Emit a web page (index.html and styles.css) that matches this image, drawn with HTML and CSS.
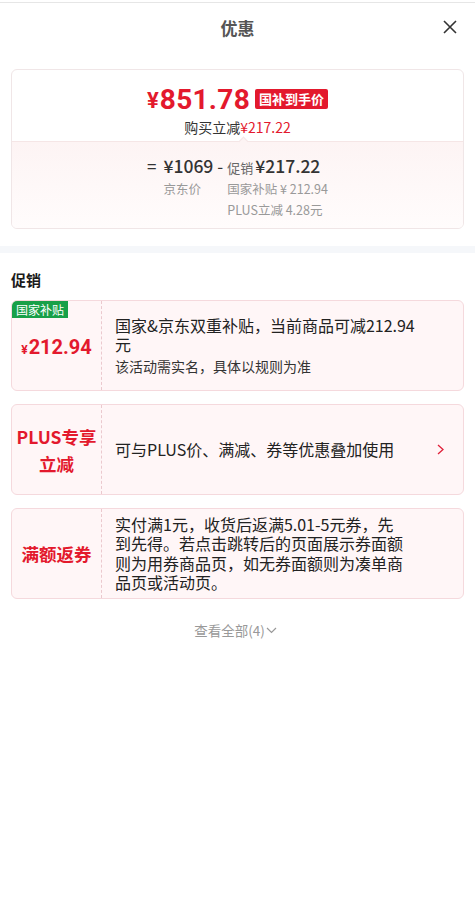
FILE: index.html
```html
<!DOCTYPE html>
<html lang="zh-CN">
<head>
  <meta charset="UTF-8">
  <meta name="viewport" content="width=device-width, initial-scale=1.0">
  <title>优惠</title>
  <link rel="stylesheet" href="styles.css">
</head>
<body>
  <div class="topline"></div>
  <header class="header">
    <span></span>
    <h1 class="title">优惠</h1>
    <button class="close" aria-label="关闭">
      <svg width="14" height="14" viewBox="0 0 14 14"><path d="M1 1L13 13M13 1L1 13" stroke="#333" stroke-width="1.6" fill="none"/></svg>
    </button>
  </header>

  <section class="summary">
    <div class="summary-top">
      <div class="final-price">
        <span class="yen">¥</span><span class="amount">851.78</span>
        <span class="badge">国补到手价</span>
      </div>
      <div class="saving">购买立减<span class="red">¥217.22</span></div>
    </div>
    <div class="summary-bottom">
      <div class="calc">
        <span class="op op--eq">=</span>
        <span class="val">¥1069</span>
        <span class="op">-</span>
        <span class="val"><small>促销</small>¥217.22</span>

        <span></span>
        <span class="note">京东价</span>
        <span></span>
        <span class="note">国家补贴 ¥ 212.94</span>

        <span></span>
        <span></span>
        <span></span>
        <span class="note">PLUS立减 4.28元</span>
      </div>
    </div>
  </section>

  <div class="band"></div>

  <section class="promos">
    <h2 class="promos-title">促销</h2>
    <div class="promo-list">
      <div class="promo">
        <span class="tag">国家补贴</span>
        <div class="promo-side">
          <div class="side-price"><span class="side-yen">¥</span>212.94</div>
        </div>
        <div class="promo-body">
          <div class="promo-text">
            国家&amp;京东双重补贴，当前商品可减212.94元
            <small>该活动需实名，具体以规则为准</small>
          </div>
        </div>
      </div>

      <div class="promo">
        <div class="promo-side">
          <div class="side-label">PLUS专享<br>立减</div>
        </div>
        <div class="promo-body">
          <div class="promo-text">可与PLUS价、满减、券等优惠叠加使用</div>
          <svg class="promo-arrow" width="7" height="11" viewBox="0 0 7 11"><path d="M1 1L6 5.5L1 10" stroke="#e0213a" stroke-width="1.3" fill="none"/></svg>
        </div>
      </div>

      <div class="promo">
        <div class="promo-side">
          <div class="side-label">满额返券</div>
        </div>
        <div class="promo-body">
          <div class="promo-text promo-text--narrow">实付满1元，收货后返满5.01-5元券，先到先得。若点击跳转后的页面展示券面额则为用券商品页，如无券面额则为凑单商品页或活动页。</div>
        </div>
      </div>
    </div>

    <div class="more">
      查看全部(4)
      <svg width="11" height="7" viewBox="0 0 11 7"><path d="M1 1L5.5 5.5L10 1" stroke="#999" stroke-width="1.2" fill="none"/></svg>
    </div>
  </section>
</body>
</html>
```

FILE: styles.css
```css
body {
  margin: 0;
  font-family: "Noto Sans CJK SC", "Noto Sans", sans-serif;
  color: #333;
  background: #fff;
}

.topline {
  margin-top: 2px;
  height: 1px;
  background: #e6e6e6;
}

.header {
  height: 48px;
  display: grid;
  grid-template-columns: 1fr auto 1fr;
  align-items: center;
}

.title {
  margin: 0;
  font-size: 17px;
  font-weight: 700;
  color: #555;
}

.close {
  justify-self: end;
  margin-right: 18px;
  padding: 0;
  border: none;
  background: none;
  width: 14px;
  height: 14px;
  display: flex;
}

/* price summary card */
.summary {
  margin: 18px 11px 0;
  border: 1px solid #f0e6e7;
  border-radius: 6px;
  overflow: hidden;
}

.summary-top {
  padding: 11px 0 4px;
  text-align: center;
  border-bottom: 1px solid #f5e6e6;
  position: relative;
}

.summary-top::after {
  content: "";
  position: absolute;
  left: 50%;
  margin-left: 2px;
  bottom: -4px;
  width: 6px;
  height: 6px;
  background: #fdf4f4;
  border-top: 1px solid #f5e6e6;
  border-left: 1px solid #f5e6e6;
  transform: rotate(45deg);
}

.final-price {
  height: 36px;
  display: flex;
  justify-content: center;
  align-items: center;
  color: #e3192d;
  font-family: Roboto, "Noto Sans", sans-serif;
  font-weight: 700;
}

.yen {
  font-size: 22px;
  margin-top: 3px;
  margin-right: 1px;
}

.amount {
  font-size: 28px;
  letter-spacing: 0.3px;
}

.badge {
  margin-left: 5px;
  height: 20px;
  line-height: 20px;
  padding: 0 4px;
  background: #e3192d;
  color: #fff;
  font-family: "Noto Sans CJK SC", sans-serif;
  font-size: 13px;
  border-radius: 2px;
}

.saving {
  font-size: 14px;
  line-height: 20px;
  color: #333;
}

.red {
  color: #e3192d;
}

.summary-bottom {
  padding: 11px 0 9px;
  background: linear-gradient(#fdf4f4, #fffcfc);
}

.calc {
  display: grid;
  grid-template-columns: repeat(4, auto);
  grid-template-rows: 24px 22px 20px;
  justify-content: center;
  align-items: center;
  column-gap: 4px;
}

.op {
  font-size: 17px;
  color: #333;
}

.op--eq {
  margin-right: 3px;
}

.val {
  font-size: 17.5px;
  font-weight: 500;
  color: #333;
}

.val small {
  font-size: 13px;
  font-weight: 400;
  color: #666;
  margin-right: 2px;
}

.note {
  font-size: 12.5px;
  color: #999;
}

.band {
  margin-top: 17px;
  height: 7px;
  background: #f5f7fa;
}

/* promotions */
.promos {
  padding: 0 11px;
}

.promos-title {
  margin: 17px 0 10px;
  font-size: 15px;
  line-height: 20px;
  font-weight: 700;
  color: #1a1a1a;
}

.promo-list {
  display: flex;
  flex-direction: column;
  gap: 13px;
}

.promo {
  position: relative;
  display: flex;
  min-height: 89px;
  border: 1px solid #f5d9dd;
  border-radius: 6px;
  background: #fff6f7;
  overflow: hidden;
}

.tag {
  position: absolute;
  top: 0;
  left: 0;
  padding: 0 4px;
  line-height: 17px;
  font-size: 12px;
  color: #fff;
  background: #18a048;
}

.promo-side {
  box-sizing: border-box;
  width: 90px;
  flex-shrink: 0;
  border-right: 1px dashed #ebc9ce;
  display: flex;
  align-items: center;
  justify-content: center;
  text-align: center;
  color: #e3192d;
  font-weight: 700;
}

.side-price {
  font-family: Roboto, "Noto Sans", sans-serif;
  font-size: 20px;
  margin-top: 2px;
}

.side-yen {
  font-size: 12px;
  margin-right: 1px;
}

.side-label {
  font-size: 17.5px;
  line-height: 27px;
}

.promo-body {
  flex: 1;
  display: flex;
  align-items: center;
  padding: 5px 19px 5px 13px;
}

.promo-text {
  width: 303px;
  font-size: 16px;
  line-height: 19.5px;
  color: #222;
}

.promo-text--narrow {
  width: 290px;
}

.promo-text small {
  display: block;
  margin-top: 2px;
  font-size: 14px;
  line-height: 19px;
  color: #333;
}

.promo-arrow {
  margin-left: auto;
}

.more {
  margin-top: 21px;
  display: flex;
  justify-content: center;
  align-items: center;
  gap: 1px;
  font-size: 13.5px;
  line-height: 20px;
  color: #999;
  margin-right: 4px;
}
```
